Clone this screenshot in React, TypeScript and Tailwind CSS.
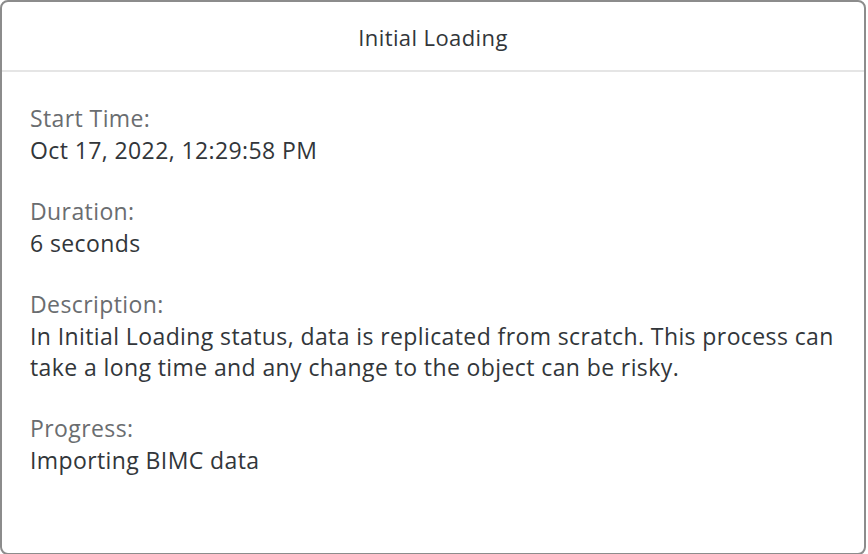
export default function App() {
  const fields = [
    { label: "Start Time:", value: "Oct 17, 2022, 12:29:58 PM" },
    { label: "Duration:", value: "6 seconds" },
    {
      label: "Description:",
      value:
        "In Initial Loading status, data is replicated from scratch. This process can take a long time and any change to the object can be risky.",
    },
    { label: "Progress:", value: "Importing BIMC data" },
  ];

  return (
    <div
      className="w-[868px] h-[554px] bg-white overflow-hidden tracking-[0.4px]"
      style={{ fontFamily: '"Open Sans", Arial, sans-serif' }}
    >
      <div className="w-[866px] h-[555px] bg-white border-2 border-[#8c8c8c] rounded-[8px] flex flex-col">
        {/* Header */}
        <div className="h-[70px] flex items-center justify-center border-b-2 border-[#e5e5e5] shrink-0">
          <span className="text-[22px] text-[#32363a] pt-[3px]">Initial Loading</span>
        </div>

        {/* Content */}
        <div className="pl-[28px] pr-[20px] pt-[29px] flex flex-col gap-[28px]">
          {fields.map((f) => (
            <div key={f.label} className="flex flex-col">
              <span className="text-[23px] leading-[34px] text-[#6a6d70]">{f.label}</span>
              <span className="text-[23px] leading-[31px] text-[#32363a]">{f.value}</span>
            </div>
          ))}
        </div>
      </div>
    </div>
  );
}
